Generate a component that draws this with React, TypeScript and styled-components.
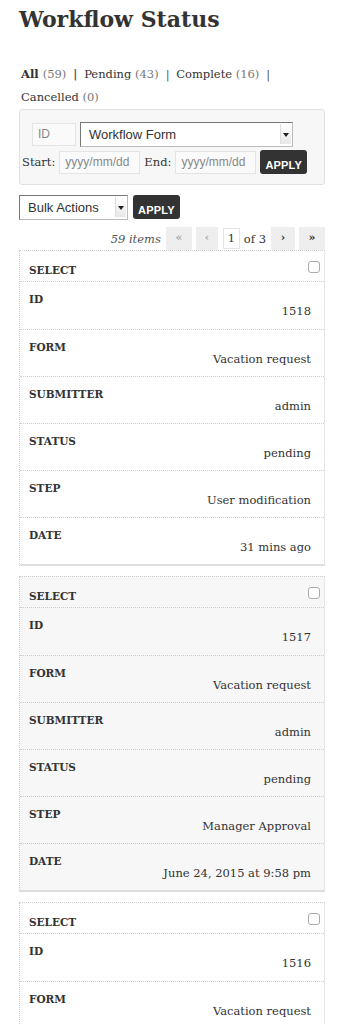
import React from "react";
import styled, { createGlobalStyle } from "styled-components";

const GlobalStyle = createGlobalStyle`
  body {
    margin: 0;
    background: #fff;
    color: #333;
    font-family: "DejaVu Serif", serif;
  }
`;

const Page = styled.div`
  padding: 0 21px 0 19px;
`;

const Title = styled.h1`
  margin: 0;
  padding-top: 4px;
  font-size: 22px;
  line-height: 30px;
  font-weight: 700;
  color: #333;
`;

const Filters = styled.ul`
  list-style: none;
  margin: 29px 0 0;
  padding: 0 0 0 2px;
  font-size: 11.5px;
  line-height: 23px;
`;

const FilterItem = styled.li<{ $current?: boolean }>`
  display: inline;
  white-space: nowrap;
  color: #333;
  font-weight: ${(p) => (p.$current ? 700 : 400)};
`;

const Count = styled.span`
  color: #777;
  font-weight: 400;
`;

const Sep = styled.span`
  color: #555;
  margin: 0 3px 0 7px;
`;

const FilterBox = styled.div`
  margin-top: 0;
  background: #f7f7f7;
  border: 1px solid #e2e2e2;
  border-radius: 3px;
  padding: 12px 2px 10px;
`;

const FieldRow = styled.div<{ $indent?: number }>`
  display: flex;
  align-items: center;
  gap: 4px;
  margin-left: ${(p) => p.$indent ?? 0}px;
  & + & {
    margin-top: 3px;
  }
`;

const TextBox = styled.div<{ $w: number }>`
  width: ${(p) => p.$w}px;
  height: 23px;
  box-sizing: border-box;
  border: 1px solid #e4e4e4;
  background: #fafafa;
  padding: 0 5px;
  font-family: "Liberation Sans", Arial, sans-serif;
  font-size: 12px;
  line-height: 21px;
  color: #888;
  white-space: nowrap;
`;

const Select = styled.div<{ $w: number }>`
  position: relative;
  width: ${(p) => p.$w}px;
  height: 25px;
  box-sizing: border-box;
  border: 1px solid #bbb;
  border-top-color: #777;
  border-left-color: #777;
  background: #fff;
  padding: 0 22px 0 8px;
  font-family: "Liberation Sans", Arial, sans-serif;
  font-size: 13px;
  line-height: 24px;
  color: #333;
`;

const SelectArrow = styled.span`
  position: absolute;
  right: 1px;
  top: 1px;
  width: 10px;
  height: 20px;
  background: linear-gradient(#fff, #e8e8e8);
  border-left: 1px solid #ddd;
  &::after {
    content: "";
    position: absolute;
    left: 2px;
    top: 9px;
    border-left: 3px solid transparent;
    border-right: 3px solid transparent;
    border-top: 4px solid #222;
  }
`;

const Label = styled.span`
  font-size: 11.5px;
  color: #333;
`;

const ApplyButton = styled.button`
  height: 24px;
  padding: 0 5px;
  border: none;
  border-radius: 3px;
  background: #333;
  color: #fff;
  font-family: "Liberation Sans", Arial, sans-serif;
  font-weight: 700;
  font-size: 11px;
  letter-spacing: 0.2px;
  line-height: 24px;
  padding-top: 3px;
`;

const BulkRow = styled.div`
  display: flex;
  align-items: flex-start;
  gap: 5px;
  margin-top: 10px;
`;

const Pagination = styled.div`
  display: flex;
  justify-content: flex-end;
  align-items: center;
  gap: 4px;
  margin-top: 7px;
  height: 23px;
`;

const Items = styled.span`
  font-style: italic;
  font-size: 11.5px;
  color: #555;
  margin-right: 1px;
`;

const PageButton = styled.span<{ $w: number; $disabled?: boolean }>`
  width: ${(p) => p.$w}px;
  height: 23px;
  background: #eee;
  text-align: center;
  font-size: 11px;
  line-height: 22px;
  font-weight: 700;
  color: ${(p) => (p.$disabled ? "#aaa" : "#333")};
`;

const PageInput = styled.span`
  width: 17px;
  height: 21px;
  box-sizing: border-box;
  border: 1px solid #e4e4e4;
  text-align: center;
  font-size: 11.5px;
  line-height: 19px;
  margin-left: 1px;
`;

const PageOf = styled.span`
  font-size: 11.5px;
  margin-right: 1px;
`;

const Card = styled.div<{ $alt?: boolean }>`
  background: ${(p) => (p.$alt ? "#f7f7f7" : "#fff")};
  border-top: 1px dotted #ccc;
  border-left: 1px dotted #ccc;
  border-right: 1px solid #e6e6e6;
  border-bottom: 2px solid #ddd;
  & + & {
    margin-top: 10px;
  }
`;

const HeaderRow = styled.div`
  display: flex;
  justify-content: space-between;
  align-items: flex-start;
  height: 31px;
  box-sizing: border-box;
  padding: 11px 4px 0 9px;
  border-bottom: 1px dotted #ccc;
`;

const Check = styled.span`
  width: 10px;
  height: 10px;
  margin-top: -1px;
  border: 1px solid #aaa;
  border-radius: 3px;
  background: #fff;
`;

const Row = styled.div`
  height: 47px;
  box-sizing: border-box;
  padding: 9px 13px 0 9px;
  & + & {
    border-top: 1px dotted #ccc;
  }
`;

const RowLabel = styled.div`
  font-size: 10.5px;
  font-weight: 700;
  line-height: 16px;
  color: #333;
`;

const RowValue = styled.div`
  margin-top: -4px;
  text-align: right;
  font-size: 11.5px;
  line-height: 16px;
  color: #333;
`;

type Entry = {
  id: string;
  form: string;
  submitter: string;
  status: string;
  step: string;
  date: string;
};

const entries: Entry[] = [
  { id: "1518", form: "Vacation request", submitter: "admin", status: "pending", step: "User modification", date: "31 mins ago" },
  { id: "1517", form: "Vacation request", submitter: "admin", status: "pending", step: "Manager Approval", date: "June 24, 2015 at 9:58 pm" },
  { id: "1516", form: "Vacation request", submitter: "admin", status: "pending", step: "Manager Approval", date: "June 24, 2015 at 9:41 pm" },
];

const EntryCard = ({ entry, alt }: { entry: Entry; alt?: boolean }) => {
  const fields: [string, string][] = [
    ["ID", entry.id],
    ["FORM", entry.form],
    ["SUBMITTER", entry.submitter],
    ["STATUS", entry.status],
    ["STEP", entry.step],
    ["DATE", entry.date],
  ];
  return (
    <Card $alt={alt}>
      <HeaderRow>
        <RowLabel>SELECT</RowLabel>
        <Check />
      </HeaderRow>
      {fields.map(([label, value]) => (
        <Row key={label}>
          <RowLabel>{label}</RowLabel>
          <RowValue>{value}</RowValue>
        </Row>
      ))}
    </Card>
  );
};

const App = () => {
  return (
    <Page>
      <GlobalStyle />
      <Title>Workflow Status</Title>
      <Filters>
        <FilterItem $current>
          All <Count>(59)</Count>
          <Sep>|</Sep>
        </FilterItem>{" "}
        <FilterItem>
          Pending <Count>(43)</Count>
          <Sep>|</Sep>
        </FilterItem>{" "}
        <FilterItem>
          Complete <Count>(16)</Count>
          <Sep>|</Sep>
        </FilterItem>{" "}
        <FilterItem>
          Cancelled <Count>(0)</Count>
        </FilterItem>
      </Filters>
      <FilterBox>
        <FieldRow $indent={10}>
          <TextBox $w={44}>ID</TextBox>
          <Select $w={213}>
            Workflow Form
            <SelectArrow />
          </Select>
        </FieldRow>
        <FieldRow>
          <Label>Start:</Label>
          <TextBox $w={81}>yyyy/mm/dd</TextBox>
          <Label>End:</Label>
          <TextBox $w={81}>yyyy/mm/dd</TextBox>
          <ApplyButton>APPLY</ApplyButton>
        </FieldRow>
      </FilterBox>
      <BulkRow>
        <Select $w={109}>
          Bulk Actions
          <SelectArrow />
        </Select>
        <ApplyButton>APPLY</ApplyButton>
      </BulkRow>
      <Pagination>
        <Items>59 items</Items>
        <PageButton $w={26} $disabled>«</PageButton>
        <PageButton $w={22} $disabled>‹</PageButton>
        <PageInput>1</PageInput>
        <PageOf>of 3</PageOf>
        <PageButton $w={24}>›</PageButton>
        <PageButton $w={26}>»</PageButton>
      </Pagination>
      {entries.map((e, i) => (
        <EntryCard key={e.id} entry={e} alt={i % 2 === 1} />
      ))}
    </Page>
  );
};

export default App;
